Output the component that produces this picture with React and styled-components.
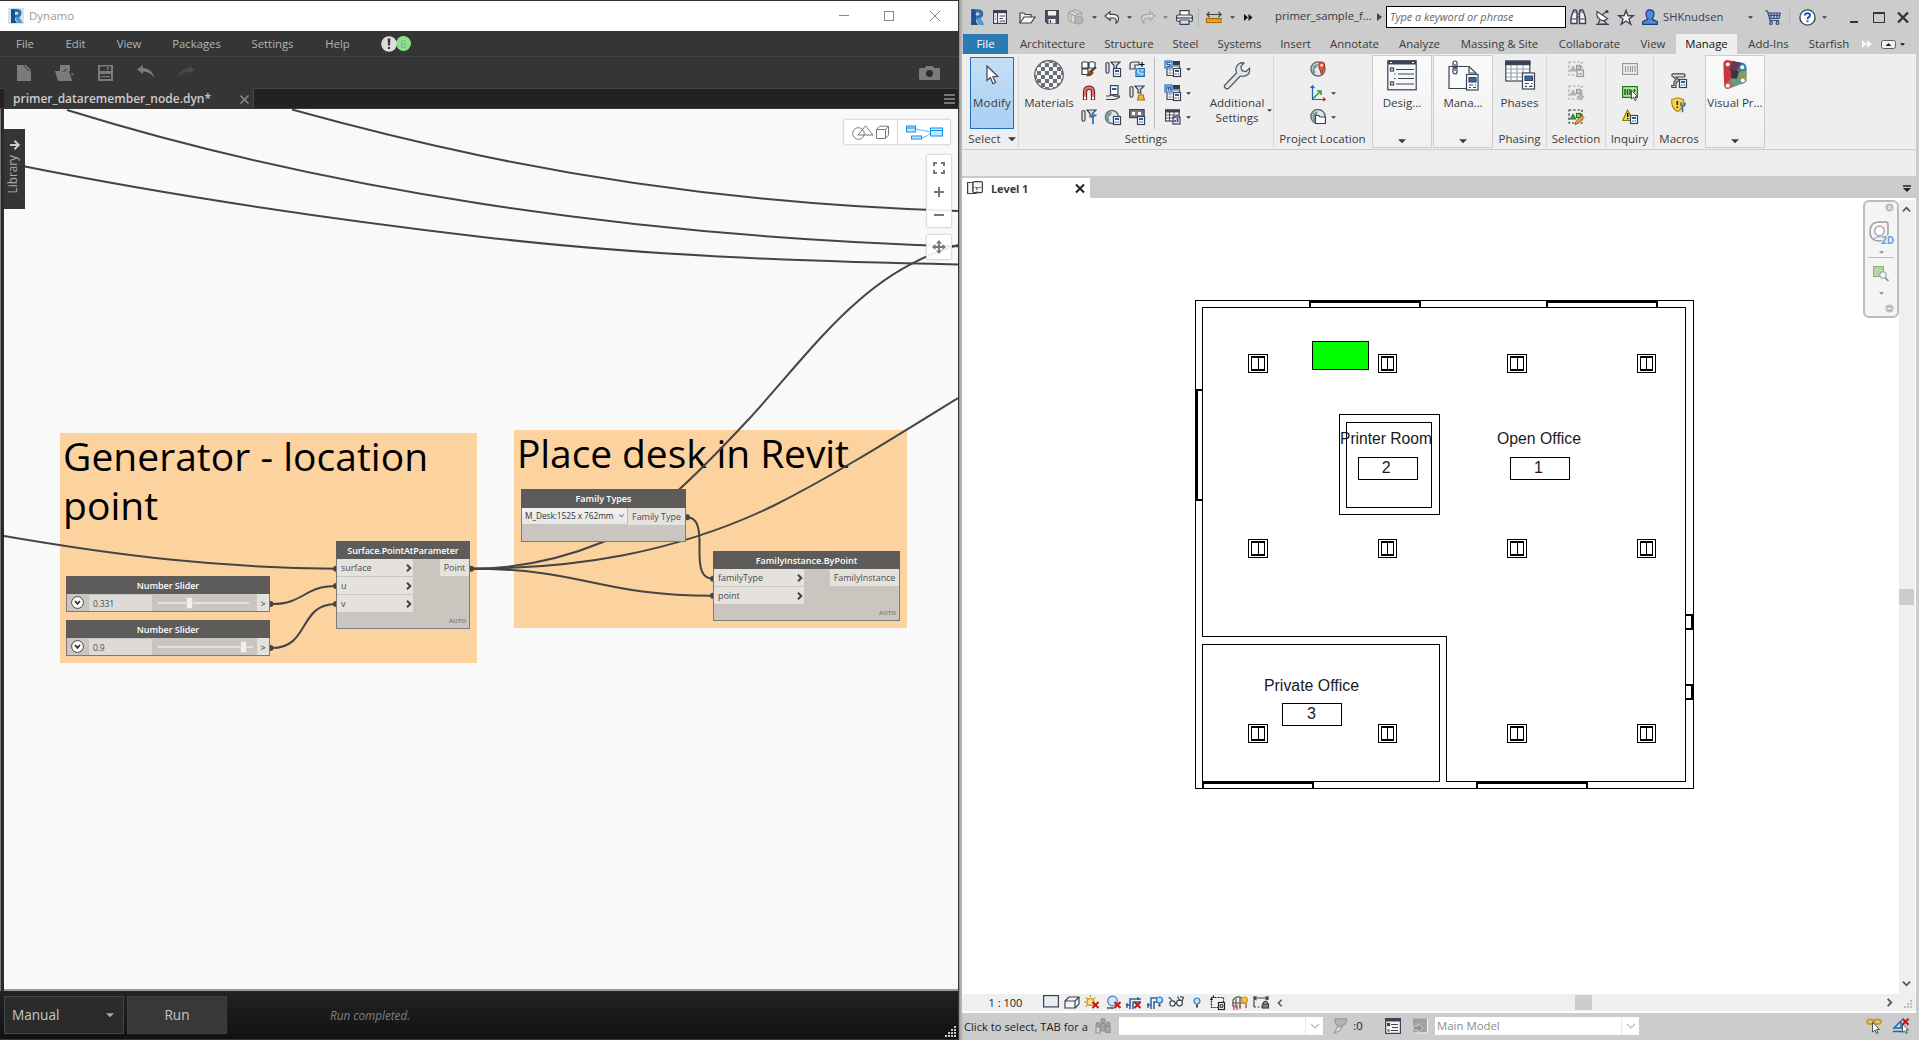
import React from "react";
import styled, { createGlobalStyle, css } from "styled-components";

const Global = createGlobalStyle`
  * { box-sizing: border-box; }
  html, body { margin: 0; padding: 0; overflow: hidden; background: #ccc; }
  body { font-family: "Open Sans", "Noto Sans", sans-serif; font-size: 11.3px; color: #3a3a3a; }
  svg { display: block; flex: none; overflow: visible; }
`;

const ink = "#3b4353";
const blue = "#1c62ad";

/* ---------- shared ---------- */

const Screen = styled.div`
  display: flex;
  width: 1919px;
  height: 1040px;
  overflow: hidden;
`;

const Slot = styled.span`
  display: flex;
  flex: none;
  align-items: center;
  justify-content: ${(p) => p.$align || "center"};
  width: ${(p) => p.$w}px;
  margin-left: ${(p) => p.$ml || 0}px;
  margin-top: ${(p) => p.$mt || 0}px;
  white-space: nowrap;
`;

const Label = styled.span`
  white-space: nowrap;
  line-height: 1;
  font-size: ${(p) => p.$s || 11.3}px;
  letter-spacing: ${(p) => p.$ls || 0}px;
  color: ${(p) => p.$c || "inherit"};
  font-style: ${(p) => (p.$i ? "italic" : "normal")};
  font-weight: ${(p) => p.$b || 400};
`;

const Icon = ({ w = 16, h = 16, box, children }) => (
  <svg width={w} height={h} viewBox={box || `0 0 ${w} ${h}`} fill="none" stroke={ink} strokeWidth="1.2">
    {children}
  </svg>
);

const Down = ({ w = 6, c = "#3a3a3a" }) => (
  <svg width={w} height={w / 2 + 0.5} viewBox="0 0 8 4">
    <path d="M0 0H8L4 4Z" fill={c} />
  </svg>
);

const Sheet = ({ x = 8, y = 7, off }) => (
  <g stroke={off ? "#999" : ink}>
    <rect x={x + 0.5} y={y + 0.5} width="7" height="8" fill="#fff" />
    <path d={`M${x + 2} ${y + 3}h4`} stroke={off ? "#aaa" : blue} strokeWidth="2" />
    <path d={`M${x + 2} ${y + 6}h1.5M${x + 4.5} ${y + 6}h1.5`} strokeWidth="1" />
  </g>
);

const RevitLogo = ({ s = 16, backed }) => (
  <svg width={s} height={s} viewBox="0 0 16 16">
    {backed && <rect width="16" height="16" fill="#d5e2f3" />}
    <path d="M3 1H9Q13.5 1 13.5 5 13.5 8 11 9L14.5 15H10L7 9.5V15H3Z" fill="#2c6fb5" />
    <path d="M3 1H6L7 3.5V15H3Z" fill="#1d5190" />
    <path d="M7 4H9Q10.3 4.2 10.3 5.2 10.2 6.6 9 6.7H7Z" fill={backed ? "#d5e2f3" : "#cccccc"} />
    <path d="M7 9.5L10 15H14.5L11 9Z" fill="#4d9bd6" />
    <path d="M7 12L9 15H3V13Z" fill="#28486f" />
  </svg>
);

/* ---------- Dynamo window ---------- */

const Dynamo = styled.section`
  display: flex;
  flex-direction: column;
  flex: none;
  width: 959px;
  height: 1040px;
  border-top: 1px solid #333;
  border-right: 1px solid #333;
  background: #353535;
`;

const DynTitle = styled.header`
  display: flex;
  align-items: center;
  height: 30px;
  padding-left: 8px;
  padding-bottom: 1px;
  background: #fff;
  color: #999;
`;

const DynMenu = styled.nav`
  display: flex;
  align-items: center;
  height: 26px;
  padding-left: 16px;
  border-bottom: 1px solid #414141;
  color: #b4b4b4;
`;

const DynTools = styled.div`
  display: flex;
  align-items: center;
  height: 31px;
  padding-left: 16px;
`;

const DynTabs = styled.div`
  display: flex;
  height: 21px;
  padding-left: 4px;
  background: #222;
  border-top: 1px solid #454545;
  border-bottom: 1px solid #3a3a3a;
`;

const DynTab = styled.div`
  display: flex;
  align-items: center;
  width: 250px;
  padding-left: 9px;
  padding-top: 2px;
  margin-top: -1px;
  border-right: 1px solid #484848;
  background: #353535;
`;

const CanvasFrame = styled.div`
  display: flex;
  height: 882px;
  border-left: 1px solid #777;
  padding-left: 3px;
  background: #2b2b2b;
`;

const Canvas = styled.main`
  position: relative;
  flex: 1;
  overflow: hidden;
  background: #f9f9f9;
  border-bottom: 2px solid #999;
`;

/* Moves the node graph so that its own coordinates start at the window corner */
const World = styled.div`
  position: absolute;
  left: -4px;
  top: -109px;
  width: 959px;
  height: 1040px;
`;

const Group = styled.div`
  position: absolute;
  left: ${(p) => p.$x}px;
  top: ${(p) => p.$y}px;
  width: ${(p) => p.$w}px;
  height: ${(p) => p.$h}px;
  padding-left: 3px;
  background: #fcd39f;
  color: #000;
  font-size: 39px;
  line-height: 49px;
  letter-spacing: ${(p) => p.$ls}px;
`;

const GroupText = styled.div`
  margin-top: -2px;
`;

const Wires = styled.svg`
  position: absolute;
  left: 0;
  top: 0;
`;

const Node = styled.div`
  position: absolute;
  left: ${(p) => p.$x}px;
  top: ${(p) => p.$y}px;
  width: ${(p) => p.$w}px;
  height: ${(p) => p.$h}px;
  display: flex;
  flex-direction: column;
  background: #cac5be;
  border: 1px solid #7a7a78;
  color: #4c4c4c;
  font-size: 9px;
`;

const NodeHead = styled.div`
  display: flex;
  align-items: center;
  justify-content: center;
  flex: none;
  height: ${(p) => p.$h || 18}px;
  margin: -1px -1px 0;
  background: #5e5c5a;
  color: #fff;
  font-weight: 600;
  font-size: 9px;
  letter-spacing: ${(p) => p.$ls || 0}px;
`;

const NodeBody = styled.div`
  display: flex;
  justify-content: space-between;
  align-items: flex-start;
  flex: 1;
`;

const Ports = styled.div`
  display: grid;
  gap: 1px;
  width: ${(p) => p.$w}px;
`;

const Port = styled.div`
  display: flex;
  align-items: center;
  justify-content: ${(p) => (p.$out ? "center" : "space-between")};
  height: 17px;
  padding: ${(p) => (p.$out ? "0" : "0 1px 0 4px")};
  background: #e5e2de;
  letter-spacing: -0.05px;
  white-space: nowrap;
`;

const Auto = styled.div`
  align-self: flex-end;
  padding: 0 3px 3px 0;
  font-size: 6px;
  line-height: 7px;
  font-weight: 700;
  color: #85827d;
`;

const Chevron = () => (
  <svg width="6" height="8" viewBox="0 0 6 8">
    <path d="M1 0.8L4.3 4L1 7.2" fill="none" stroke="#444" strokeWidth="2" />
  </svg>
);

const SliderBody = styled.div`
  display: flex;
  align-items: stretch;
  flex: 1;
`;

const Expand = styled.div`
  display: flex;
  align-items: center;
  justify-content: center;
  width: 21px;
`;

const SliderValue = styled.div`
  display: flex;
  align-items: center;
  width: 65px;
  padding: 1px 0 0 4px;
  background: #dedbd7;
  border: 1px solid #c3c4c8;
  border-bottom: 0;
  font-size: 8.6px;
  letter-spacing: -0.2px;
`;

const Track = styled.div`
  display: flex;
  align-items: center;
  flex: 1;
  padding: 0 4px 0 5px;
`;

const Rail = styled.div`
  height: 2px;
  width: ${(p) => p.$w}px;
  background: #e4e2df;
`;

const Thumb = styled.div`
  width: 7px;
  height: 12px;
  background: #f0f0f0;
  border: 1px solid #d0d0d0;
`;

const SliderOut = styled.div`
  display: flex;
  align-items: center;
  justify-content: center;
  width: 12px;
  padding-top: 1px;
  font-weight: 600;
  background: #e5e2de;
`;

const FamilySelect = styled.div`
  display: flex;
  align-items: center;
  justify-content: space-between;
  width: 106px;
  height: 16px;
  padding: 0 3px 1px 3px;
  background: linear-gradient(#f2f2f2, #e6e6e6);
  border-right: 1px solid #bbb;
  font-size: 8.4px;
  letter-spacing: -0.1px;
  color: #333;
  white-space: nowrap;
`;

const Library = styled.div`
  position: absolute;
  left: 0;
  top: 20px;
  width: 21px;
  height: 80px;
  padding-top: 11px;
  display: flex;
  flex-direction: column;
  align-items: center;
  gap: 5px;
  background: #353535;
  color: #b0b0b0;
`;

const SideText = styled.span`
  writing-mode: vertical-rl;
  transform: rotate(180deg);
  font-size: 11.8px;
  line-height: 18px;
  margin-right: 5px;
`;

const floating = css`
  position: absolute;
  display: flex;
  background: rgba(255, 255, 255, 0.9);
  border: 1px solid #dcdcdc;
  border-radius: 2px;
  box-shadow: 0 0 2px rgba(0, 0, 0, 0.14);
`;

const ModeSwitch = styled.div`
  ${floating}
  right: 7px;
  top: 10px;
  height: 26px;
`;

const Mode = styled.div`
  display: flex;
  align-items: center;
  justify-content: center;
  width: 53px;
  border-left: ${(p) => (p.$second ? "1px solid #d4d4d4" : "0")};
`;

const ZoomBox = styled.div`
  ${floating}
  right: 6px;
  top: ${(p) => p.$y}px;
  width: 26px;
  height: ${(p) => p.$h}px;
  padding: ${(p) => p.$pad || 0}px 0;
  flex-direction: column;
  align-items: center;
  justify-content: space-between;
`;

const RunBar = styled.footer`
  display: flex;
  height: 48px;
  padding: 5px 2px 5px 4px;
  background: linear-gradient(#232323, #111);
`;

const RunMode = styled.div`
  display: flex;
  align-items: center;
  justify-content: space-between;
  width: 120px;
  height: 38px;
  padding: 0 9px 0 7px;
  background: #2b2b2b;
  border: 1px solid #464646;
  color: #c8c8c8;
`;

const RunButton = styled.div`
  display: flex;
  align-items: center;
  justify-content: center;
  width: 100px;
  height: 38px;
  margin-left: 3px;
  background: #383838;
  border: 1px solid #404040;
  color: #c8c8c8;
`;

const RunState = styled.div`
  display: flex;
  flex: 1;
  align-items: center;
  padding-left: 103px;
  padding-top: 1px;
`;

const Grip = styled.div`
  align-self: flex-end;
  margin-bottom: -3px;
`;

const dots = (color, step, n) => {
  const out = [];
  for (let r = 0; r < n; r++)
    for (let c = n - 1 - r; c < n; c++)
      out.push(<rect key={`${r}-${c}`} x={c * step} y={r * step} width="2" height="2" fill={color} />);
  return out;
};

function DynamoToolbar() {
  const g = "#7b7b7b";
  return (
    <DynTools>
      <Slot $w={15}>
        <svg width="14" height="16" viewBox="0 0 14 16"><path d="M0 0H7L14 7V16H0Z" fill={g} /><path d="M7 0H9L14 5V7Z" fill={g} /><path d="M6.5 0.5L9.5 4L13.5 6" stroke="#444" fill="none" /></svg>
      </Slot>
      <Slot $w={20} $ml={23}>
        <svg width="19" height="16" viewBox="0 0 19 16"><path d="M5 0H15V6H13L11 3.5 9 6H5Z" fill={g} /><path d="M0 6H7L9 7 12 4.5 14 6 17 15.5 16 16H3Z" fill={g} /><path d="M16 8H19L17 12Z" fill="#666" /></svg>
      </Slot>
      <Slot $w={16} $ml={23}>
        <svg width="15" height="16" viewBox="0 0 15 16"><path d="M0 0H15V16H0ZM2 1.5V6H13V1.5ZM2 9V14H13V9Z" fill={g} fillRule="evenodd" /><path d="M9 2h1.5v3H9zM3 11h9v1.2H3z" fill={g} /></svg>
      </Slot>
      <Slot $w={18} $ml={24} $mt={-2}>
        <svg width="18" height="14" viewBox="0 0 18 14"><path d="M0 4.5L6 0V3Q15 3.5 17.5 13 13 6.5 6 6.5V9Z" fill={g} /></svg>
      </Slot>
      <Slot $w={18} $ml={22} $mt={-2}>
        <svg width="18" height="14" viewBox="0 0 18 14"><path d="M18 4.5L12 0V3Q3 3.5 .5 13 5 6.5 12 6.5V9Z" fill="#484848" /></svg>
      </Slot>
      <Slot $w={22} $ml={723}>
        <svg width="21" height="14" viewBox="0 0 21 14"><path d="M1 2H6L7 0H14L15 2H20L21 3V13L20 14H1L0 13V3Z" fill={g} /><circle cx="10.5" cy="7.5" r="3.5" fill="#2d2d2d" /></svg>
      </Slot>
    </DynTools>
  );
}

const wirePaths = [
  "M67 110C204.7 152.7 342.3 182.2 480 203.5C639.3 228.2 798.7 241.5 958 246.3",
  "M292 109.5C354.7 126.9 417.3 142.3 480 155.5C639.3 189 798.7 206.2 958 211",
  "M4 162L25 166.5C176.7 196.8 328.3 218.8 480 236.7C639.3 255.5 798.7 261.5 958 264.5",
  "M4 536C120 556 220 568 336 568.7",
  "M272 604C304 604 304 586 336 586",
  "M272 648C310 648 298 604 336 604",
  "M471 568.7C585 568.7 598 595.8 713 595.8",
  "M471 568.7C571.7 568.7 672.3 554.3 773 506C834.7 475 896.3 436 958 398",
  "M471 568.7C515 568.7 559 560 603 542C651.3 521.7 699.7 471.7 748 420C784 381 820 334 857 302C885 277 920 256 958 245",
  "M687 517.3C697 517.3 700 527 699.5 547C699 570 702 578.7 713 578.7",
];

const wireEnds = [[336, 568.7], [336, 586], [336, 604], [270.5, 604], [270.5, 648], [471, 568.7], [687, 517.3], [713, 578.7], [713, 595.8]];

const NumberSlider = ({ y, value, before, after }) => (
  <Node $x={66} $y={y} $w={204} $h={36}>
    <NodeHead $ls={-0.05}>Number Slider</NodeHead>
    <SliderBody>
      <Expand>
        <svg width="13" height="13" viewBox="0 0 13 13"><circle cx="6.5" cy="6.5" r="5.9" fill="#fff" stroke="#444" /><path d="M4 5L6.5 7.8L9 5" fill="none" stroke="#333" strokeWidth="1.8" /></svg>
      </Expand>
      <SliderValue>{value}</SliderValue>
      <Track>
        <Rail $w={before} />
        <Thumb />
        <Rail $w={after} />
      </Track>
      <SliderOut>&gt;</SliderOut>
    </SliderBody>
  </Node>
);

function DynamoGraph() {
  return (
    <World>
      <Group $x={60} $y={433} $w={417} $h={230} $ls={0.03}><GroupText>Generator - location<br />point</GroupText></Group>
      <Group $x={514} $y={430} $w={393} $h={198} $ls={-0.1}><GroupText>Place desk in Revit</GroupText></Group>
      <Wires width="959" height="1040" viewBox="0 0 959 1040">
        {wirePaths.map((d) => <path key={d} d={d} fill="none" stroke="#444" strokeWidth="2" />)}
        {wireEnds.map(([x, y]) => <circle key={`${x},${y}`} cx={x} cy={y} r="3" fill="#444" />)}
      </Wires>
      <NumberSlider y={576} value="0.331" before={28} after={56} />
      <NumberSlider y={620} value="0.9" before={82} after={6} />
      <Node $x={336} $y={541} $w={134} $h={88}>
        <NodeHead $ls={-0.1}>Surface.PointAtParameter</NodeHead>
        <NodeBody>
          <Ports $w={76}>
            {["surface", "u", "v"].map((t) => <Port key={t}>{t}<Chevron /></Port>)}
          </Ports>
          <Ports $w={29}><Port $out>Point</Port></Ports>
        </NodeBody>
        <Auto>AUTO</Auto>
      </Node>
      <Node $x={521} $y={489} $w={165} $h={53}>
        <NodeHead $h={19}>Family Types</NodeHead>
        <NodeBody>
          <FamilySelect>
            M_Desk:1525 x 762mm
            <svg width="5" height="4" viewBox="0 0 5 4"><path d="M.5 .5L2.5 3L4.5 .5" fill="none" stroke="#555" /></svg>
          </FamilySelect>
          <Ports $w={57}><Port $out>Family Type</Port></Ports>
        </NodeBody>
      </Node>
      <Node $x={713} $y={551} $w={187} $h={70}>
        <NodeHead>FamilyInstance.ByPoint</NodeHead>
        <NodeBody>
          <Ports $w={90}>
            {["familyType", "point"].map((t) => <Port key={t}>{t}<Chevron /></Port>)}
          </Ports>
          <Ports $w={69}><Port $out>FamilyInstance</Port></Ports>
        </NodeBody>
        <Auto>AUTO</Auto>
      </Node>
    </World>
  );
}

function DynamoWindow() {
  return (
    <Dynamo>
      <DynTitle>
        <RevitLogo backed />
        <Slot $w={46} $ml={5} $mt={1} $align="flex-start"><Label $s={11.5}>Dynamo</Label></Slot>
        <Slot $w={10} $ml={764}><svg width="10" height="1"><rect width="10" height="1" fill="#888" /></svg></Slot>
        <Slot $w={10} $ml={35}><svg width="10" height="10"><rect x=".5" y=".5" width="9" height="9" fill="none" stroke="#888" /></svg></Slot>
        <Slot $w={10} $ml={36}><svg width="10" height="10"><path d="M0 0L10 10M10 0L0 10" stroke="#888" /></svg></Slot>
      </DynTitle>
      <DynMenu>
        {[["File", 18, 0], ["Edit", 21, 31], ["View", 26, 30], ["Packages", 49, 30], ["Settings", 43, 30], ["Help", 25, 31]].map(([t, w, ml]) => (
          <Slot key={t} $w={w} $ml={ml}><Label>{t}</Label></Slot>
        ))}
        <Slot $w={30} $ml={31}>
          <svg width="30" height="16" viewBox="0 0 30 16">
            <circle cx="22.5" cy="7.5" r="7.5" fill="#84e584" />
            <circle cx="8" cy="8" r="7.8" fill="#dcdcdc" />
            <path d="M6.6 2.5H9.4L8.9 9.5H7.1ZM7 11H9V13H7Z" fill="#333" />
            <text x="22.3" y="11.6" fontSize="11" fontWeight="600" textAnchor="middle" fill="#a5a5a5" fontFamily="Open Sans">6</text>
          </svg>
        </Slot>
      </DynMenu>
      <DynamoToolbar />
      <DynTabs>
        <DynTab>
          <Slot $w={227} $align="flex-start"><Label $b={600} $c="#ccc" $s={12}>primer_dataremember_node.dyn*</Label></Slot>
          <svg width="9" height="9"><path d="M.5 .5L8.5 8.5M8.5 .5L.5 8.5" stroke="#888" strokeWidth="1.6" /></svg>
        </DynTab>
        <Slot $w={11} $ml={690}><svg width="11" height="10"><path d="M0 1H11M0 5H11M0 9H11" stroke="#777" strokeWidth="2" /></svg></Slot>
      </DynTabs>
      <CanvasFrame>
        <Canvas>
          <DynamoGraph />
          <Library>
            <svg width="10" height="10" viewBox="0 0 10 10"><path d="M0 5H8.5M4.5 .8L8.8 5L4.5 9.2" fill="none" stroke="#ccc" strokeWidth="2" /></svg>
            <SideText>Library</SideText>
          </Library>
          <ModeSwitch>
            <Mode>
              <svg width="37" height="15" viewBox="0 0 37 15" fill="none" stroke="#777"><circle cx="6.5" cy="8.5" r="5.8" /><path d="M13.5 .8L21 10H6ZM24.5 4.5H33.5V13.5H24.5ZM24.5 4.5L27.5 1.2H36.5L33.5 4.5M36.5 1.2V10L33.5 13.5" /></svg>
            </Mode>
            <Mode $second>
              <svg width="37" height="15" viewBox="0 0 37 15" fill="#cce6fb" stroke="#0a91f5"><path d="M9.5 4L24.5 7M15.5 13Q21 12 24.5 8" fill="none" stroke="#5ab4f5" /><rect x=".5" y="1" width="9" height="6" /><path d="M0 3H10M24 5H37" /><rect x="24.5" y="3" width="12" height="8" /><path d="M24 5.5H37" /><rect x="5.5" y="11" width="10" height="3" /></svg>
            </Mode>
          </ModeSwitch>
          <ZoomBox $y={45} $h={74} $pad={7}>
            <svg width="12" height="12"><path d="M1 4V1H4M8 1H11V4M11 8V11H8M4 11H1V8" fill="none" stroke="#777" strokeWidth="2" /></svg>
            <svg width="10" height="10"><path d="M0 5H10M5 0V10" stroke="#777" strokeWidth="2" /></svg>
            <svg width="10" height="10"><path d="M0 5H10" stroke="#777" strokeWidth="2" /></svg>
          </ZoomBox>
          <ZoomBox $y={125} $h={26} $pad={5}>
            <svg width="14" height="14" viewBox="0 0 14 14"><path d="M7 2V12M2 7H12" stroke="#777" strokeWidth="1.8" /><path d="M7 0L10 3.4H4ZM7 14L10 10.6H4ZM0 7L3.4 4V10ZM14 7L10.6 4V10Z" fill="#777" /></svg>
          </ZoomBox>
        </Canvas>
      </CanvasFrame>
      <RunBar>
        <RunMode><Label $s={13.6}>Manual</Label><Down w={8} c="#aaa" /></RunMode>
        <RunButton><Label $s={13.6}>Run</Label></RunButton>
        <RunState><Label $s={11.7} $i $c="#808080">Run completed.</Label></RunState>
        <Grip><svg width="11" height="11">{dots("#ccc", 3, 4)}</svg></Grip>
      </RunBar>
    </Dynamo>
  );
}

/* ---------- Revit window ---------- */

const Revit = styled.section`
  display: flex;
  flex-direction: column;
  width: 960px;
  height: 1040px;
  padding: 0 3px 0 4px;
  background: linear-gradient(90deg, #8f8f8f, #b4b4b4 2px, #ccc 5px);
`;

const TitleBar = styled.header`
  display: flex;
  align-items: center;
  height: 34px;
  flex: none;
  margin-left: -2px;
`;

const Divider = styled.span`
  width: 1px;
  flex: none;
  height: ${(p) => p.$h}px;
  margin-left: ${(p) => p.$ml || 0}px;
  background: #b9b9b9;
`;

const Search = styled.div`
  display: flex;
  flex: none;
  align-items: center;
  width: 180px;
  height: 22px;
  margin-left: 4px;
  padding-left: 3px;
  background: #fff;
  border: 1px solid #000;
`;

const RibbonTabs = styled.nav`
  display: flex;
  flex: none;
  height: 20px;
`;

const RibbonTab = styled.span`
  display: flex;
  align-items: center;
  justify-content: center;
  flex: none;
  width: ${(p) => p.$w}px;
  margin-left: ${(p) => p.$ml || 0}px;
  background: ${(p) => (p.$file ? "#2a7ab3" : p.$on ? "#eee" : "transparent")};
  color: ${(p) => (p.$file ? "#fff" : p.$on ? "#111" : "#3a3a3a")};
`;

const Ribbon = styled.div`
  display: flex;
  flex: none;
  height: 96px;
  padding-top: 1px;
  margin-left: -1px;
  background: #eee;
  border-bottom: 1px solid #ccc;
`;

const Panel = styled.div`
  display: flex;
  flex-direction: column;
  flex: none;
  width: ${(p) => p.$w}px;
  height: 93px;
  border-right: 1px solid ${(p) => (p.$noline ? "transparent" : "#d9d9d9")};
`;

const PanelBody = styled.div`
  display: flex;
  justify-content: ${(p) => (p.$start ? "flex-start" : "center")};
  height: 76px;
  padding-top: ${(p) => (p.$pt === undefined ? 2 : p.$pt)}px;
  padding-left: ${(p) => p.$pl || 0}px;
`;

const PanelTitle = styled.div`
  display: flex;
  align-items: center;
  justify-content: center;
  gap: 7px;
  height: 16px;
  padding-left: ${(p) => p.$pl || 0}px;
`;

const PopPanel = styled.div`
  display: flex;
  flex-direction: column;
  align-items: center;
  flex: none;
  width: 60px;
  height: 93px;
  margin-right: ${(p) => p.$mr || 0}px;
  padding: 4px 0;
  background: linear-gradient(#fafafa, #f0f0f0);
  border: 1px solid #cdcdcd;
`;

const BigButton = styled.div`
  display: flex;
  flex-direction: column;
  align-items: center;
  flex: none;
  width: ${(p) => p.$w}px;
  height: 72px;
  margin-left: ${(p) => p.$ml || 0}px;
  padding-top: 3px;
  ${(p) => p.$on && css`
    background: linear-gradient(#c4def6, #a9cff2);
    border: 1px solid #1a6fc4;
    padding-top: 2px;
  `}
`;

const IconBox = styled.div`
  display: flex;
  align-items: center;
  justify-content: center;
  height: 30px;
  margin-bottom: 5px;
`;

const ButtonText = styled.div`
  line-height: 15px;
  text-align: center;
  white-space: nowrap;
  font-size: 11.5px;
  letter-spacing: ${(p) => p.$ls || 0}px;
`;

const Spacer = styled.span`
  flex: 1;
`;

const IconGrid = styled.div`
  display: grid;
  grid-template-columns: repeat(${(p) => p.$cols}, 16px);
  grid-auto-rows: 16px;
  column-gap: 8px;
  row-gap: 8px;
  align-content: start;
  padding-top: ${(p) => p.$pt || 4}px;
  margin-left: ${(p) => p.$ml || 0}px;
`;

const DropIcon = styled.div`
  display: flex;
  align-items: center;
  gap: 5px;
  width: 28px;
`;

const Options = styled.div`
  flex: none;
  height: 26px;
  margin-left: -1px;
  background: #ededed;
`;

const DocTabs = styled.div`
  display: flex;
  flex: none;
  height: 22px;
  padding-top: 2px;
  margin-left: -1px;
`;

const DocTab = styled.div`
  display: flex;
  align-items: center;
  width: 128px;
  padding-left: 5px;
  background: #fff;
`;

const ViewArea = styled.div`
  display: flex;
  flex: none;
  height: 796px;
  margin-left: -1px;
  background: #fff;
`;

const PlanWrap = styled.div`
  position: relative;
  flex: 1;
`;

const VScroll = styled.div`
  display: flex;
  flex-direction: column;
  align-items: center;
  width: 16px;
  margin: 2px 1px 0 0;
  padding: 5px 1px 6px 0;
  background: #efefef;
`;

const ScrollThumb = styled.div`
  flex: none;
  width: ${(p) => p.$w}px;
  height: ${(p) => p.$h}px;
  background: #cdcdcd;
  margin: ${(p) => p.$m};
`;

const NavBar = styled.div`
  position: absolute;
  right: 0;
  top: 2px;
  width: 36px;
  height: 118px;
  display: flex;
  flex-direction: column;
  align-items: center;
  background: #f4f4f4;
  border: 2px solid #bcbcbc;
  border-radius: 6px;
`;

const NavLine = styled.div`
  flex: none;
  width: 26px;
  height: 1px;
  margin: 3px 0 8px;
  background: #bbb;
`;

const ViewBar = styled.div`
  display: flex;
  align-items: center;
  flex: none;
  height: 19px;
  margin-left: -1px;
  background: #efefef;
  border-bottom: 2px solid #fff;
`;

const Status = styled.footer`
  display: flex;
  align-items: center;
  flex: none;
  height: 27px;
  padding-left: 1px;
  padding-bottom: 1px;
`;

const Hint = styled.div`
  width: 124px;
  flex: none;
  overflow: hidden;
  color: #222;
  white-space: nowrap;
`;

const Combo = styled.div`
  display: flex;
  align-items: center;
  flex: none;
  width: 204px;
  height: 18px;
  margin-left: ${(p) => p.$ml}px;
  padding-left: 2px;
  background: #fff;
`;

const ComboArrow = styled.div`
  display: flex;
  align-items: center;
  justify-content: center;
  width: 18px;
  height: 18px;
  margin-left: auto;
  border-left: 1px solid #e8e8e8;
`;

const Chev = ({ dir = 0, c = "#555", w = 9, sw = 2 }) => (
  <svg width={w} height={w} viewBox="0 0 10 10"><path d="M1 7L5 3L9 7" transform={`rotate(${dir} 5 5)`} fill="none" stroke={c} strokeWidth={sw} /></svg>
);

function RevitTitle() {
  const off = "#a5a5a5";
  return (
    <TitleBar>
      <Slot $w={16} $ml={8}><RevitLogo s={18} /></Slot>
      <Slot $w={15} $ml={7}><Icon w={14} h={14}><rect x=".6" y=".6" width="12.8" height="12.8" fill="#fff" /><path d="M0 1.7H14" strokeWidth="3" /><path d="M4.5 3V13M6.5 6H12M6.5 8.5H10M6.5 11H12M2 6H3M2 9H3" /></Icon></Slot>
      <Slot $w={17} $ml={12}><Icon w={17} h={13}><path d="M1 12V2H5L6 3.5H12V6" fill="#eee" /><path d="M1 12L5 6H16L12 12Z" fill="#f6f6f6" /></Icon></Slot>
      <Slot $w={15} $ml={8}><Icon w={14} h={14}><path d="M.6 .6H13.4V13.4H2.6L.6 11.4Z" fill="#4a5262" /><path d="M3 1H11V5.5H3Z" fill="#eee" stroke="none" /><path d="M3.5 9H10.5V13.5H3.5Z" fill="#eee" stroke="none" /><path d="M5.5 10V13" /></Icon></Slot>
      <Slot $w={17} $ml={8}><Icon w={17} h={16}><g stroke={off}><path d="M8 .7L14.5 3.5V11L8 14.5L1.5 11V3.5Z" fill="#ddd" /><path d="M1.5 3.5L8 7L14.5 3.5M8 7V14.5M4 5V12M5 2L11 5" /><circle cx="12" cy="11" r="4" fill="#b5b5b5" /></g></Icon></Slot>
      <Slot $w={6} $ml={7}><Down w={5} /></Slot>
      <Slot $w={16} $ml={7}><Icon w={16} h={13}><path d="M1 5L6 .8V3.3H10Q15 4 14.5 8.5 14.3 11 12 12.3 13 7.5 10 7H6V9.2Z" fill="#f4f4f4" /></Icon></Slot>
      <Slot $w={6} $ml={6}><Down w={5} /></Slot>
      <Slot $w={16} $ml={8}><Icon w={16} h={13}><path d="M15 5L10 .8V3.3H6Q1 4 1.5 8.5 1.7 11 4 12.3 3 7.5 6 7H10V9.2Z" fill="#d8d8d8" stroke={off} /></Icon></Slot>
      <Slot $w={6} $ml={6}><Down w={5} c="#777" /></Slot>
      <Slot $w={18} $ml={7}><Icon w={17} h={15}><path d="M4 5V.6H13V5" fill="#fff" /><rect x=".6" y="5" width="15.8" height="6.5" rx="1.5" fill="#eee" /><path d="M1 8H16" /><path d="M4 10H13V14.4H4Z" fill="#cfe3f3" /></Icon></Slot>
      <Divider $h={22} $ml={5} />
      <Slot $w={16} $ml={7}><Icon w={16} h={11}><path d="M1 2.5H15M3.5 0L1 2.5L3.5 5M12.5 0L15 2.5L12.5 5" /><rect x=".5" y="6.5" width="14.5" height="4" fill="#f5b425" stroke="#a86b00" /><path d="M4 7V9M7 7V9M10 7V9M12.5 7V9" stroke="#a86b00" strokeWidth=".8" /></Icon></Slot>
      <Slot $w={6} $ml={7}><Down w={5} /></Slot>
      <Slot $w={9} $ml={9}><svg width="9" height="7"><path d="M0 0L4 3.5L0 7ZM4.5 0L8.5 3.5L4.5 7Z" fill="#111" /></svg></Slot>
      <Slot $w={96} $ml={22} $mt={-3} $align="flex-start"><Label>primer_sample_f...</Label></Slot>
      <Slot $w={5} $ml={6}><svg width="5" height="8"><path d="M0 0L5 4L0 8Z" fill="#444" /></svg></Slot>
      <Search><Label $i $c="#666" $s={10.9}>Type a keyword or phrase</Label></Search>
      <Slot $w={17} $ml={4}><Icon w={17} h={16}><path d="M1 14.5V9L3 2.5Q3.5 .8 5 .8T7 3V14.5Z M9.5 14.5V3Q9.6 .8 11.3 .8T13.5 2.5L15.5 9V14.5Z" fill="#f3f3f3" strokeWidth="1.4" /><path d="M7 5H9.5M7 8H9.5M1 10H7M9.5 10H15.5M3 3H7M10 3H13.5" /></Icon></Slot>
      <Slot $w={16} $ml={7}><Icon w={15} h={15}><path d="M2 1.5Q1 7 5 9.5T12.5 8.5Z" fill="#fff" /><path d="M7 5L11.5 1.5" /><circle cx="12" cy="1.5" r="1" fill={ink} /><path d="M5 10L3 14H12L8.5 10.5M1 14.3H14" /></Icon></Slot>
      <Slot $w={17} $ml={7}><Icon w={16} h={15}><path d="M8 .5L10 5.700H15.300L11 9L12.700 14.300L8 11L3.300 14.300L5 9L.7 5.700H6Z" fill="#f6f6f6" strokeWidth="1.4" /></Icon></Slot>
      <Slot $w={17} $ml={7}><Icon w={16} h={16}><path d="M8 .8Q12 .8 12 5 12 8 10 10 11 11 15.3 12.5V15.3H.7V12.5Q5 11 6 10 4 8 4 5 4 .8 8 .8Z" fill="#4f8ad8" stroke="#1c3f7c" /></Icon></Slot>
      <Slot $w={64} $ml={5} $align="flex-start"><Label $c="#33405e" $s={11.2}>SHKnudsen</Label></Slot>
      <Slot $w={6} $ml={20}><Down w={5} /></Slot>
      <Slot $w={17} $ml={11}><Icon w={16} h={15}><path d="M0 1H2.5L5 10.5H14M3 3H15.3L14 8.5H4.5M6 3V8M9 3V8M12 3V8M3.5 5.5H15" stroke="#2f4a84" /><circle cx="6" cy="13" r="1.3" fill="#fff" /><circle cx="12.5" cy="13" r="1.3" fill="#fff" /></Icon></Slot>
      <Divider $h={18} $ml={8} />
      <Slot $w={18} $ml={8}><Icon w={17} h={17}><circle cx="8.5" cy="8.5" r="7.6" fill="#fff" strokeWidth="1.4" /><path d="M6 6.5Q6 4.3 8.5 4.3T11 6.5Q11 7.7 9.5 8.3 8.6 8.8 8.6 10.2" stroke="#1f55b0" strokeWidth="2" /><path d="M8.5 11.3V13.2" stroke="#1f55b0" strokeWidth="2" /></Icon></Slot>
      <Slot $w={6} $ml={5}><Down w={5} /></Slot>
      <Slot $w={9} $ml={22} $mt={10}><svg width="8" height="2"><rect width="8" height="2" fill="#333" /></svg></Slot>
      <Slot $w={13} $ml={14}><svg width="12" height="11"><rect x=".5" y="1" width="11" height="9.5" fill="none" stroke="#333" /><path d="M0 1H12" stroke="#333" strokeWidth="2" /></svg></Slot>
      <Slot $w={12} $ml={12}><svg width="12" height="11"><path d="M1 .5L11 10.5M11 .5L1 10.5" stroke="#333" strokeWidth="2.4" /></svg></Slot>
    </TitleBar>
  );
}

const tabs = [["Architecture", 85], ["Structure", 68], ["Steel", 45], ["Systems", 63], ["Insert", 49], ["Annotate", 69], ["Analyze", 61], ["Massing & Site", 99], ["Collaborate", 81], ["View", 46], ["Manage", 61], ["Add-Ins", 63], ["Starfish", 58]];

/* 16px ribbon glyphs */
const Funnel = () => (
  <g>
    <path d="M1 2.5Q2.5 .5 4 2.5V11Q2.5 13.5 1 11Z" fill="#dfe6ee" />
    <path d="M6 1H15L11.5 4.5V8H9V4.5Z" fill="#d8dde4" />
  </g>
);
const Globe = ({ cx = 7, cy = 8, r = 6.5 }) => (
  <g>
    <circle cx={cx} cy={cy} r={r} fill="#dfe8ea" stroke="#6b7078" strokeWidth="1.6" />
    <path d={`M${cx - 5} ${cy - 3}q3-2.5 5-2l-1 3-2.5 2 1 4-1.5 1q-2.5-3-1-8z`} fill="#7c9a94" stroke="none" />
  </g>
);
const Dashed = ({ off, extra }) => {
  const c = off ? "#a3a3a3" : "#333";
  const f = off ? "#bbb" : "#6cae5c";
  return (
    <Icon>
      <rect x="1" y="1" width="13" height="13" stroke={c} strokeDasharray="2.5 1.7" />
      <path d="M2.5 10L5 5.5L7.5 10Z" fill={f} stroke={off ? "#aaa" : "#20701c"} />
      <rect x="8.5" y="4.5" width="4" height="4" fill={off ? "#ccc" : "#9ad089"} stroke={off ? "#999" : "#20701c"} />
      {extra}
    </Icon>
  );
};

const settingsIcons = [
  <Icon><path d="M1 1.5Q3.5 0 7 1.5V7H1Z M8 1.5Q11 0 14 1.5V7H8Z M1 8H7V13.5H1Z" fill="#fff" /><path d="M15 6L10 10.5" stroke="#3b4353" strokeWidth="2.2" /><path d="M10.5 9L12 11.5Q10 15 6.5 14.7 8 13.5 8 12T10.5 9Z" fill="#8c5728" stroke="#6b3d14" /></Icon>,
  <Icon><Funnel /><Sheet /></Icon>,
  <Icon><path d="M1 4Q1 1 4 1H10V4H6V8H1Z" fill="#e4e9ee" /><path d="M13 1V6M10.5 3.5H15.5" stroke="#000" /><path d="M7 10Q7 7.5 9.5 7.5H15.3V15.3H7Z" fill="#a9d8f5" stroke="#0e6ab4" /><path d="M8 12L11 15M11 8V11H15" stroke="#0e6ab4" strokeWidth=".8" /></Icon>,
  <Icon><path d="M4 15V7Q4 2.600 8 2.600T12 7V15" stroke="#5c1c1c" strokeWidth="4.200" /><path d="M4 14.500V7Q4 2.600 8 2.600T12 7V14.500" stroke="#ee7470" strokeWidth="2.200" /><path d="M2.900 13H5.100M10.900 13H13.100" stroke="#fff" strokeWidth="2.600" /></Icon>,
  <Icon><rect x="5.5" y=".6" width="7.5" height="9" fill="#fff" /><path d="M7 4H11.5" stroke={blue} strokeWidth="2" /><path d="M1 11H4L7 9.7 9.5 11.2H14.5L14 12.5 9.5 14.5H1" fill="#e4e7ea" /></Icon>,
  <Icon><Funnel /><path d="M12 6V10M9.5 10H14.5V12L15.5 15H8.5L9.5 12Z" fill="#f1bd3b" stroke="#a9741a" /></Icon>,
  <Icon><Funnel /><path d="M13.5 5.5L12 7.5V15.3M10.5 5.5L12 7.5L15.5 6" stroke="#3b6fae" strokeWidth="1.8" /></Icon>,
  <Icon><Globe /><Sheet /></Icon>,
  <Icon><rect x=".6" y=".6" width="14.5" height="8" fill="#787d86" /><path d="M3 3H6V6H3ZM9 3H12V6H9Z" fill="#fff" stroke="none" /><Sheet /></Icon>,
];

const listIcon = (mark) => (
  <Icon>
    <path d="M2 5H14.5V14.5H2Z" fill="#fff" /><path d="M8 2H15" stroke="#333b49" strokeWidth="4" /><rect x="0" y="0" width="7" height="7" fill="#cfe0f4" stroke="#3271be" />
    <path d={mark} stroke="#1c5bb0" /><path d="M2 9H8M2 12H8M5 7V15" stroke="#8a909a" strokeWidth=".8" /><Sheet />
  </Icon>
);

const checkerCells = [];
for (let r = -4; r < 4; r++)
  for (let c = -4; c < 4; c++)
    if ((r + c) % 2 === 0) checkerCells.push(<rect key={`${r}${c}`} x={15 + c * 4} y={15 + r * 4} width="4" height="4" fill="#6a6f78" />);

function RibbonPanels() {
  return (
    <Ribbon>
      <Panel $w={57}>
        <PanelBody $start>
          <BigButton $w={44} $ml={8} $on>
            <IconBox><svg width="13" height="20" viewBox="0 0 13 20"><path d="M1 1V15.5L4.3 12.5L7 18.7L9.6 17.5L7 11.7L11.7 11.3Z" fill="#fff" stroke={ink} strokeWidth="1.2" /></svg></IconBox>
            <ButtonText $ls={0.2}>Modify</ButtonText>
          </BigButton>
        </PanelBody>
        <PanelTitle $pl={4}><Label $s={11.5} $ls={0.1}>Select</Label><Down w={8} /></PanelTitle>
      </Panel>
      <Panel $w={255}>
        <PanelBody $start>
          <BigButton $w={58} $ml={1}>
            <IconBox>
              <svg width="30" height="30" viewBox="0 0 30 30"><defs><clipPath id="ball"><circle cx="15" cy="15" r="14" /></clipPath></defs><circle cx="15" cy="15" r="14.3" fill="#f4f4f4" stroke="#555b66" strokeWidth="1.2" /><g clipPath="url(#ball)">{checkerCells}</g></svg>
            </IconBox>
            <ButtonText>Materials</ButtonText>
          </BigButton>
          <IconGrid $cols={3} $ml={3}>{settingsIcons.map((x, i) => <React.Fragment key={i}>{x}</React.Fragment>)}</IconGrid>
          <Divider $h={72} $ml={9} />
          <IconGrid $cols={1} $ml={10}>
            <DropIcon>{listIcon("M5.5 1.5H2V3.5H5V5.5H1.5")}<Down w={5} /></DropIcon>
            <DropIcon>{listIcon("M1.7 5.5V2H5.5V5.5M3.6 2V5.5")}<Down w={5} /></DropIcon>
            <DropIcon>
              <Icon><rect x=".6" y="1" width="13.5" height="11" fill="#fff" /><path d="M0 2H15" strokeWidth="3" /><path d="M1 6H14M1 9H14M4.5 2V12M9 2V12" strokeWidth=".9" /><rect x="8" y="8" width="7" height="7" fill="#e4e4f4" /><path d="M9 9L13 6" stroke="#c33" /><path d="M10 13V11M12.5 13V9" stroke="#24b" strokeWidth="1.6" /></Icon>
              <Down w={5} />
            </DropIcon>
          </IconGrid>
          <BigButton $w={58} $ml={27}>
            <IconBox><svg width="29" height="29" viewBox="0 0 29 29"><path d="M2 24L13.5 12Q11.5 6 16 2.8 18.5 1.2 21 2L17.8 5.6 19 9.7 23 10.6 26.5 7.3Q27.3 11.3 24.5 13.8 21.5 16.3 17.3 15L6 27Q3.8 28.5 2.2 27 .6 25.5 2 24Z" fill="#e3e5ea" stroke="#555b68" strokeWidth="1.3" /></svg></IconBox>
            <ButtonText $ls={0.02}>Additional<br />Settings</ButtonText>
          </BigButton>
          <Slot $w={6} $mt={32}><Down w={5} /></Slot>
        </PanelBody>
        <PanelTitle><Label $s={11.5}>Settings</Label></PanelTitle>
      </Panel>
      <Panel $w={98} $noline>
        <PanelBody $start $pl={36}>
          <IconGrid $cols={1}>
            <DropIcon><Icon><Globe cx={8} cy={8} r={7} /><path d="M11.5 13L9 6Q8.3 1.2 11.7 1.2T14.5 6Z" fill="#e25a35" stroke="#b53c1c" /><circle cx="11.7" cy="4.3" r="1.2" fill="#fff" stroke="none" /></Icon></DropIcon>
            <DropIcon><Icon><path d="M2.5 15V1M.5 3L2.5 .8L4.5 3" stroke="#1b62b7" /><path d="M2 14.5H15M13 12.5L15.3 14.5L13 16" stroke="#d22" /><path d="M3 13.5L11 6M7 6H11V10" stroke="#2f9a2b" strokeWidth="1.5" /></Icon><Down w={5} /></DropIcon>
            <DropIcon><Icon><Globe cx={8} cy={7.5} r={7} /><path d="M5.5 14.5V6.5H9L10 8H15.4V14.5Z" fill="#fff" /></Icon><Down w={5} /></DropIcon>
          </IconGrid>
        </PanelBody>
        <PanelTitle><Label $s={11.5}>Project Location</Label></PanelTitle>
      </Panel>
      <PopPanel $mr={1}>
        <IconBox><Icon w={30} h={31}><rect x=".8" y=".8" width="28.4" height="29" fill="#f6f7f9" /><path d="M1 2.5H29" strokeWidth="4" /><path d="M3 2.5H5M25 2.5H27" stroke="#fff" /><rect x="3.5" y="8" width="3" height="3" /><path d="M9 9.5H27M7 14H8.5M11 14H27M7 18.5H8.5M11 18.5H27M9 24H27" /><rect x="3.5" y="22" width="3" height="3" /></Icon></IconBox>
        <ButtonText>Desig...</ButtonText><Spacer /><Down w={8} />
      </PopPanel>
      <PopPanel>
        <IconBox><Icon w={30} h={31}><path d="M1 6.5H21L28 13V28.5H1Z" fill="#fafbfc" /><path d="M21 6.5V13H28" /><rect x="5" y="1" width="4" height="7" rx="2" /><rect x="5" y="7" width="4" height="7" rx="2" /><path d="M7 4V11" /><rect x="18.5" y="14.5" width="11.5" height="15.5" fill="#fff" /><path d="M21 17.5H28V22H21Z" fill="#2a6aa8" /><path d="M21 25H25M27 25H28M21 27.5H23M25 27.5H28" /></Icon></IconBox>
        <ButtonText>Mana...</ButtonText><Spacer /><Down w={8} />
      </PopPanel>
      <Panel $w={54}>
        <PanelBody>
          <BigButton $w={50}>
            <IconBox><Icon w={30} h={30}><rect x=".8" y="1" width="24" height="20" fill="#fff" /><path d="M0 3H25.5" strokeWidth="4.5" /><path d="M1 9H24M1 13H24M1 17H24M6 5V21M12 5V21M18 5V21" stroke="#98a2b0" /><rect x="17.5" y="13" width="12" height="16" fill="#fff" /><path d="M20 16H27.5V20.5H20Z" fill="#2a6aa8" /><path d="M20 23.5H24M26 23.5H27.5M20 26.3H22M24 26.3H27.5" /></Icon></IconBox>
            <ButtonText>Phases</ButtonText>
          </BigButton>
        </PanelBody>
        <PanelTitle><Label $s={11.5}>Phasing</Label></PanelTitle>
      </Panel>
      <Panel $w={59}>
        <PanelBody>
          <IconGrid $cols={1}>
            <Dashed off extra={<g stroke="#999"><rect x="9" y="9" width="6.5" height="6.5" fill="#e6e6e6" /><path d="M10.5 13H14" /></g>} />
            <Dashed off extra={<path d="M11 8H14V11.5H16L12.5 15.5L9 11.5H11Z" fill="#bbb" stroke="#999" strokeWidth=".6" />} />
            <Dashed extra={<path d="M7 15.5L8 12.5L14 6.5L16 8.5L10 14.5Z" fill="#f2a33a" stroke="#a04a12" strokeWidth=".9" />} />
          </IconGrid>
        </PanelBody>
        <PanelTitle><Label $s={11.5}>Selection</Label></PanelTitle>
      </Panel>
      <Panel $w={48}>
        <PanelBody>
          <IconGrid $cols={1}>
            <Icon><rect x=".6" y="2.6" width="14.8" height="10.8" fill="#f0f0f0" stroke="#999" /><path d="M3.5 5V11M6 5V11M8.5 5V11M10.5 5V11M13 5V11" stroke="#999" /></Icon>
            <Icon><rect x=".6" y="1.6" width="14.8" height="10.8" fill="#b9e3ad" stroke="#1e7a1a" /><path d="M3 4V10M5.5 4V10M8 4V10M12.5 4V7" stroke="#125f10" strokeWidth="1.5" /><path d="M9.5 5V14L11.5 12.2L13 15.5L14.3 14.8L13 11.8H15.5Z" fill="#fff" strokeWidth=".9" /></Icon>
            <Icon><path d="M5.5 1L11 11.5H.8Z" fill="#f6e04a" stroke="#8d7a14" /><path d="M5.7 4V8M5.7 9V10.3" stroke="#111" strokeWidth="1.5" /><Sheet y={6} /></Icon>
          </IconGrid>
        </PanelBody>
        <PanelTitle><Label $s={11.5}>Inquiry</Label></PanelTitle>
      </Panel>
      <Panel $w={51} $noline>
        <PanelBody $pt={14}>
          <IconGrid $cols={1}>
            <Icon><path d="M2 .8H12.5Q14 .8 14 2.5T12.5 4H5L8 7 5 10V14.5H1.5Q.5 14.5 .7 12.5H3V9L5 6.5 2.5 4Q.8 3.5 .8 2.3T2 .8Z" fill="#dfe5ea" /><Sheet y={6} /></Icon>
            <Icon><path d="M6.5 .8L12.5 2.5Q13.5 10 6.5 14.8 -.5 10 .8 2.5Z" fill="#f7d34c" stroke="#b88a14" /><path d="M6.3 4V8M6.3 9.5V11" stroke="#222" strokeWidth="1.6" /><path d="M10 5.5V8L11.5 9V15.3M13.8 5.5V8L12.5 9" stroke="#3b6fae" strokeWidth="1.7" /></Icon>
          </IconGrid>
        </PanelBody>
        <PanelTitle><Label $s={11.5}>Macros</Label></PanelTitle>
      </Panel>
      <PopPanel>
        <IconBox>
          <svg width="25" height="30" viewBox="0 0 25 31">
            <path d="M4 0L20 3L13 14L1 28Q0 14 0 3Q1 0 4 0Z" fill="#c8373c" />
            <path d="M9 1L21 3Q24 5 24 8L23 22L13 14Z" fill="#2b86a8" /><path d="M9 1L18 3L13 14L6 10Z" fill="#6b3358" />
            <path d="M13 14L24 10V22Q22 24 19 25Z" fill="#8d9a5e" /><path d="M13 14L20 24L5 30Q1 30 1 26Z" fill="#b06a5a" /><path d="M13 14L20 24L11 27L7 20Z" fill="#5f9f86" /><path d="M8 10L16 12L14 19L8 19Z" fill="#3d3342" />
            <g fill="#fff"><circle cx="4.5" cy="4.5" r="2" /><circle cx="19.5" cy="7.5" r="2" /><circle cx="20" cy="21" r="2" /><circle cx="4.5" cy="26.5" r="2" /></g>
          </svg>
        </IconBox>
        <ButtonText>Visual Pr...</ButtonText><Spacer /><Down w={8} />
      </PopPanel>
    </Ribbon>
  );
}

/* left edge and outer width of each structural column */
const columns = [[1248, 19], [1378, 18], [1507, 19], [1637, 18]];
const columnYs = [354, 539, 723.5];

const PlanText = ({ x, y, w, children }) => (
  <text x={x} y={y} fontSize="16" fontFamily="Liberation Sans, Arial, sans-serif" textAnchor="middle" fill="#1a1a1a" stroke="none" textLength={w} lengthAdjust="spacingAndGlyphs">{children}</text>
);

/* frame of a window opening, drawn on three sides of the wall gap */
const Opening = ({ x, y, w, h, side }) => {
  const d = {
    top: `M${x} ${y + h}V${y + 1}H${x + w}V${y + h}`,
    left: `M${x + w} ${y}H${x + 1}V${y + h}H${x + w}`,
    right: `M${x} ${y}H${x + w - 1}V${y + h}H${x}`,
  }[side];
  return <path d={d} strokeWidth="2" />;
};

function FloorPlan() {
  return (
    <svg width="936" height="796" viewBox="962 198 936 796" fill="none" stroke="#000" strokeWidth="1">
      <g shapeRendering="crispEdges">
        <rect x="1195.5" y="300.5" width="498" height="488" />
        <path d="M1202.5 307.5H1685.5V781.5H1446.5V636.5H1202.5Z" />
        <rect x="1202.5" y="644.5" width="237" height="137" />
        <rect x="1339.5" y="414.5" width="100" height="100" />
        <rect x="1346.5" y="422.5" width="85" height="85" />
        <Opening side="top" x={1310} y={300.5} w={110} h={7} />
        <Opening side="top" x={1547} y={300.5} w={110} h={7} />
        <Opening side="left" x={1195.5} y={390} w={7} h={110} />
        <Opening side="right" x={1685.5} y={615} w={7.5} h={14} />
        <Opening side="right" x={1685.5} y={685} w={7.5} h={14} />
        <Opening side="top" x={1203} y={781.5} w={110} h={7} />
        <Opening side="top" x={1477} y={781.5} w={110} h={7} />
        <rect x="1312.5" y="341.5" width="56" height="28" fill="#00ff00" />
        {columns.map(([x, w]) => columnYs.map((y) => (
          <g key={`${x}-${y}`}>
            <rect x={x + 0.5} y={y + 0.5} width={w} height="18" />
            <rect x={x + 3.5} y={y + 3.5} width={w - 6} height="12" />
            <path d={`M${x + 3} ${y + 3}h${w - 5}M${x + 3} ${y + 16}h${w - 5}`} strokeWidth="2" />
            <path d={`M${x + (w === 19 ? 10.5 : 9.5)} ${y + 3}v13`} />
          </g>
        )))}
        <rect x="1358.5" y="457.5" width="59" height="22" />
        <rect x="1510.5" y="457.5" width="59" height="22" />
        <rect x="1282.5" y="703.5" width="59" height="22" />
      </g>
      <PlanText x={1386} y={444} w={92}>Printer Room</PlanText>
      <PlanText x={1539} y={444} w={84}>Open Office</PlanText>
      <PlanText x={1311.5} y={691} w={95}>Private Office</PlanText>
      <PlanText x={1386.3} y={473}>2</PlanText>
      <PlanText x={1538.5} y={473}>1</PlanText>
      <PlanText x={1311.5} y={719}>3</PlanText>
    </svg>
  );
}

const RoundMark = ({ d }) => (
  <svg width="9" height="9" viewBox="0 0 9 9"><circle cx="4.5" cy="4.5" r="4" fill="#bdbdbd" /><path d={d} stroke="#fff" /></svg>
);

const MarkRow = styled.div`
  display: flex;
  justify-content: flex-end;
  width: 100%;
  padding: 0 3px;
  margin-top: ${(p) => p.$mt}px;
  margin-bottom: ${(p) => p.$mb || 0}px;
`;

function NavigationBar() {
  return (
    <NavBar>
      <MarkRow $mt={1} $mb={8}><RoundMark d="M3 3L6 6M6 3L3 6" /></MarkRow>
      <svg width="24" height="26" viewBox="0 0 24 26">
        <path d="M1 11.5Q1 2 10.5 2H17Q19 2 19 4V13Q18 21 10.500 21Q1 21 1 11.500Z" fill="#f4f4f6" stroke="#9c9ca0" strokeWidth="1.4" />
        <circle cx="10.5" cy="11" r="4.800" fill="#fff" stroke="#9c9ca0" strokeWidth="1.3" /><path d="M4.500 19Q10 14.500 16 18.500" fill="none" stroke="#9c9ca0" />
        <text x="12" y="24" fontSize="10" fontWeight="700" fontFamily="Open Sans" fill="#6c9fcf" stroke="#f4f4f4" strokeWidth="1.5" paintOrder="stroke">2D</text>
      </svg>
      <Slot $w={6} $mt={5}><Down w={5} c="#888" /></Slot>
      <NavLine />
      <svg width="16" height="16" viewBox="0 0 16 16"><rect x=".5" y=".5" width="10" height="10" fill="#b9d5a8" stroke="#86b57a" /><circle cx="10" cy="9" r="3.300" fill="#eef3f5" stroke="#999" /><path d="M12 11.500L15.500 15" stroke="#999" strokeWidth="1.800" /></svg>
      <Slot $w={6} $mt={10}><Down w={5} c="#888" /></Slot>
      <MarkRow $mt={9}><RoundMark d="M2.500 4.500H6.500" /></MarkRow>
    </NavBar>
  );
}

const RedX = ({ x = 8, y = 8 }) => <path d={`M${x} ${y}l6 6m0 -6l-6 6`} stroke="#c01818" strokeWidth="2" />;
const Bulb = ({ x, y, c = "#bfe0fa" }) => <g><circle cx={x} cy={y} r="3" fill={c} stroke="#2a74b8" /><path d={`M${x} ${y + 3.5}v3`} stroke="#444" strokeWidth="2" /></g>;

function ViewControls() {
  return (
    <ViewBar>
      <Slot $w={37} $ml={25}><Label $c="#222" $s={11}>1 :  100</Label></Slot>
      <Slot $w={16} $ml={19} $mt={-2}><Icon h={13}><rect x=".6" y=".6" width="14.8" height="11.300" fill="#e8ecf2" /></Icon></Slot>
      <Slot $w={16} $ml={5} $mt={-1}><Icon h={13}><path d="M1 5H11V12H1ZM1 5L5 1H15V8L11 12M11 5L15 1" fill="#f4f4f6" /></Icon></Slot>
      <Slot $w={16} $ml={4}><Icon><circle cx="6.500" cy="7" r="3.500" fill="#ffe08a" stroke="#c8861a" /><path d="M6.500 0V2M0 7H2M2 2.500L3.300 3.800M11 2.500L9.800 3.800M2 11.500L3.300 10.200" stroke="#c8861a" /><RedX x={8.5} y={7} /></Icon></Slot>
      <Slot $w={16} $ml={6}><Icon><circle cx="6.500" cy="6" r="4.800" fill="#cfe6f8" stroke="#4682b8" /><path d="M1 13H8" stroke="#777" strokeWidth="2" /><RedX x={8.5} y={7} /></Icon></Slot>
      <Slot $w={16} $ml={4}><Icon><path d="M0 10H4M4 14V4H15M7 14V7H15" stroke="#2a6ab0" strokeWidth="1.600" /><path d="M12 2V5M1 8V13" /><RedX x={8.5} y={7} /></Icon></Slot>
      <Slot $w={16} $ml={5}><Icon><path d="M0 10H4M4 14V3H10M7 14V7H10" stroke="#2a6ab0" strokeWidth="1.600" /><path d="M1 8V13" /><Bulb x={12.5} y={5} /></Icon></Slot>
      <Slot $w={16} $ml={5}><Icon><path d="M.5 3Q3 2 3.500 5.500M12.500 6L9.500 1.500" /><circle cx="4.500" cy="8.500" r="2.600" fill="#fff" /><circle cx="11.500" cy="8" r="2.800" fill="#fff" /><path d="M7 8.500L8.800 8M14 6L15.500 2.500L12 1.500" /></Icon></Slot>
      <Slot $w={10} $ml={8}><Icon w={8} h={12}><Bulb x={4} y={4} /></Icon></Slot>
      <Slot $w={16} $ml={8}><Icon><rect x="1.500" y="2.500" width="12" height="10" fill="#f4f4f4" stroke="#222" strokeDasharray="2 1" /><path d="M0 4.500H3M3.500 .5V3" stroke="#222" /><rect x="8.500" y="7.500" width="6" height="7" fill="#fff" stroke="#222" /><circle cx="11.500" cy="11" r="1.500" stroke="#222" /></Icon></Slot>
      <Slot $w={17} $ml={5}><Icon><path d="M1 12V5Q4 1 8 2L14 6V13M4 13V4M8 13V2M0 8H13" stroke="#555" /><path d="M2 10V15M5 10V15M8 10V14" stroke="#c33" /><circle cx="12.500" cy="5" r="3" fill="#ffbf3f" stroke="#e29117" /></Icon></Slot>
      <Slot $w={17} $ml={4}><Icon><path d="M1 3H15M1 1V12M15 1V5M3.500 1.500L1 3L3.500 5M12.500 1.500L15 3L12.500 5" stroke="#444" /><path d="M1 12H9" strokeDasharray="2 1.500" /><rect x="9.500" y="9" width="6" height="4" fill="#888" /><path d="M10.500 9V7.500Q12.500 5.500 14.500 7.500V9" /></Icon></Slot>
      <Slot $w={8} $ml={7}><Chev dir={-90} w={8} /></Slot>
      <ScrollThumb $w={17} $h={15} $m="0 0 0 291px" />
      <Slot $w={8} $ml={293}><Chev dir={90} w={9} /></Slot>
      <Slot $w={9} $ml={11} $mt={4}><svg width="9" height="9">{dots("#bbb", 3, 3)}</svg></Slot>
    </ViewBar>
  );
}

function StatusBar() {
  return (
    <Status>
      <Hint><Label $s={11.2}>Click to select, TAB for a</Label></Hint>
      <Slot $w={16} $ml={7}><Icon><g fill="#a8a8a8" stroke="#8f8f8f"><circle cx="8" cy="2.600" r="2" /><path d="M6 5.500H10V13H6Z" /><circle cx="3" cy="6.500" r="1.900" /><path d="M1 9H5V15H1Z" fill="#d8d8d8" /><circle cx="13" cy="6" r="1.900" /><path d="M10.500 8.500H15V14.500H10.500Z" /></g></Icon></Slot>
      <Combo $ml={8}><ComboArrow><Chev dir={180} c="#bbb" w={10} sw={1.2} /></ComboArrow></Combo>
      <Slot $w={16} $ml={9}><Icon><path d="M3 .8H14.500Q15.500 5 10 8V9L7 8.500Q2 5 3 .8Z" fill="#b5b5b5" stroke="#999" /><path d="M2 15L6 8.500L9.500 9L7 13Z" fill="#eee" stroke="#999" /></Icon></Slot>
      <Slot $w={12} $ml={4}><Label $c="#222">:0</Label></Slot>
      <Slot $w={16} $ml={21}><Icon><rect x=".6" y=".6" width="14.800" height="14.800" fill="#f4f4f4" /><path d="M0 2H16" strokeWidth="3" /><path d="M6 6.500H13M7 9.500H13M6 12.500H13" /><rect x="2.500" y="5.500" width="2" height="2" /><path d="M2.500 12.500H4.500" strokeWidth="2" /></Icon></Slot>
      <Slot $w={16} $ml={11}><Icon><rect x="1" y=".5" width="14.500" height="14" fill="#a0a0a0" stroke="none" /><path d="M15.500 1V15H3" stroke="#eee" /><path d="M2 8H6V5.500L11 10L6 14.500V12H1Z" fill="#8f8f8f" stroke="#ddd" strokeWidth=".8" /></Icon></Slot>
      <Combo $ml={7}><Label $c="#8b8b8b" $s={11.4}>Main Model</Label><ComboArrow><Chev dir={180} c="#bbb" w={10} sw={1.2} /></ComboArrow></Combo>
      <Slot $w={16} $ml={227}><Icon><path d="M1 4Q1 1.500 4 1.500T8 4Q8 6 4.500 6T1 4ZM8 4Q8 1.500 11.500 1.500T15 4Q15 6 11.500 6T8 4Z" stroke="#d19a13" strokeWidth="1.900" /><path d="M6.500 4V14L9 12L10.500 15.500L12 15L10.500 11.500H13.500Z" fill="#fff" strokeWidth=".9" /></Icon></Slot>
      <Slot $w={17} $ml={10}><Icon><path d="M1 10L8 3V10ZM0 13.500H9" fill="#bfe0f5" stroke="#1b67ae" strokeWidth="1.500" /><path d="M9.500 .8L15.500 6.800M15.500 .8L9.500 6.800" stroke="#c01818" strokeWidth="2" /><path d="M9.500 6V14.500L11.500 12.800L13 15.500L14.300 15L13 12H15.500Z" fill="#fff" strokeWidth=".9" /></Icon></Slot>
    </Status>
  );
}

function RevitWindow() {
  return (
    <Revit>
      <RevitTitle />
      <RibbonTabs>
        <RibbonTab $w={45} $file><Label $s={11.5}>File</Label></RibbonTab>
        {tabs.map(([t, w], i) => (
          <RibbonTab key={t} $w={w} $ml={i === 0 ? 2 : 0} $on={t === "Manage"}><Label $s={11.4}>{t}</Label></RibbonTab>
        ))}
        <Slot $w={10} $ml={4}><svg width="10" height="8"><path d="M0 0L5 4L0 8ZM5 0L10 4L5 8Z" fill="#f6f6f6" /></svg></Slot>
        <Slot $w={15} $ml={9}><svg width="15" height="9"><rect x=".5" y=".5" width="14" height="8" rx="2" fill="#eef2f8" stroke="#555e70" /><path d="M4.500 6L7.500 3L10.500 6Z" fill="#222" /></svg></Slot>
        <Slot $w={6} $ml={3}><Down w={5} c="#111" /></Slot>
      </RibbonTabs>
      <RibbonPanels />
      <Options />
      <DocTabs>
        <DocTab>
          <Icon w={16} h={14}><path d="M.6 1.500H6V10H9V12.500H.6Z" fill="#f4f4f4" /><rect x="6" y=".6" width="9.400" height="11" rx="1" fill="#f4f4f4" /><path d="M5 6.500H15M10 7V11.500" strokeDasharray="2 1.200" /></Icon>
          <Slot $w={84} $ml={8} $align="flex-start"><Label $b={700} $s={11} $ls={-0.1}>Level 1</Label></Slot>
          <svg width="10" height="9"><path d="M1 .5L9 8.500M9 .5L1 8.500" stroke="#222" strokeWidth="2" /></svg>
        </DocTab>
        <Slot $w={8} $ml={813}><svg width="8" height="7"><path d="M0 1H8" stroke="#222" strokeWidth="1.500" /><path d="M0 3H8L4 7Z" fill="#222" /></svg></Slot>
      </DocTabs>
      <ViewArea>
        <PlanWrap>
          <FloorPlan />
          <NavigationBar />
        </PlanWrap>
        <VScroll>
          <Chev w={9} />
          <ScrollThumb $w={15} $h={16} $m="375px 0 auto" />
          <Chev w={9} dir={180} />
        </VScroll>
      </ViewArea>
      <ViewControls />
      <StatusBar />
    </Revit>
  );
}

export default function App() {
  return (
    <Screen>
      <Global />
      <DynamoWindow />
      <RevitWindow />
    </Screen>
  );
}
